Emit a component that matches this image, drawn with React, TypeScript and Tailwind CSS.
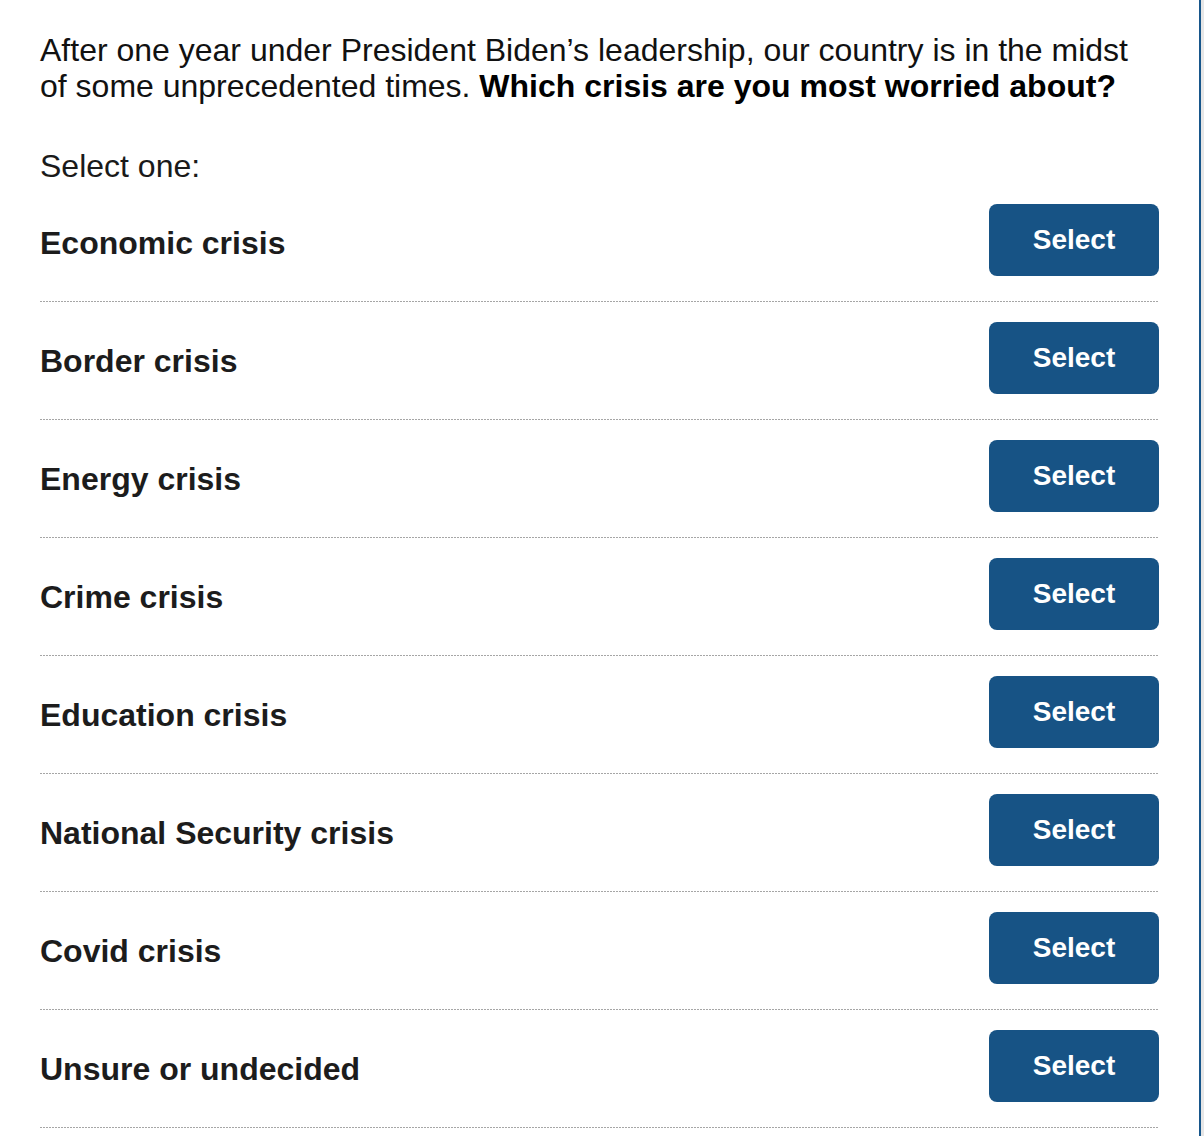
const options = [
  'Economic crisis',
  'Border crisis',
  'Energy crisis',
  'Crime crisis',
  'Education crisis',
  'National Security crisis',
  'Covid crisis',
  'Unsure or undecided',
]

export default function App() {
  return (
    <div className="flex min-h-[1136px] bg-[#e6e6e6] font-['Liberation_Sans',Arial,sans-serif]">
      <div className="w-[1201px] bg-white border-r-2 border-[#17568b] pl-10 pr-10 pt-8">
        <p className="text-[32px] leading-[36px] text-[#111]">
          After one year under President Biden’s leadership, our country is in the midst of some unprecedented times.{' '}
          <strong className="font-bold text-black">Which crisis are you most worried about?</strong>
        </p>
        <p className="mt-[44px] text-[32px] leading-[36px] text-[#1a1a1a]">Select one:</p>
        <div>
          {options.map(label => (
            <div key={label}>
              <div className="flex items-center justify-between pt-5 pb-[25px]">
                <span className="mt-[6px] text-[32px] leading-[36px] font-bold text-[#1c1c1c]">{label}</span>
                <button className="w-[170px] h-[72px] rounded-lg bg-[#175385] text-white text-[28px] font-bold">
                  Select
                </button>
              </div>
              <div className="h-px bg-[repeating-linear-gradient(to_right,#a6a6a6_0_2px,transparent_2px_3px)]" />
            </div>
          ))}
        </div>
      </div>
    </div>
  )
}
